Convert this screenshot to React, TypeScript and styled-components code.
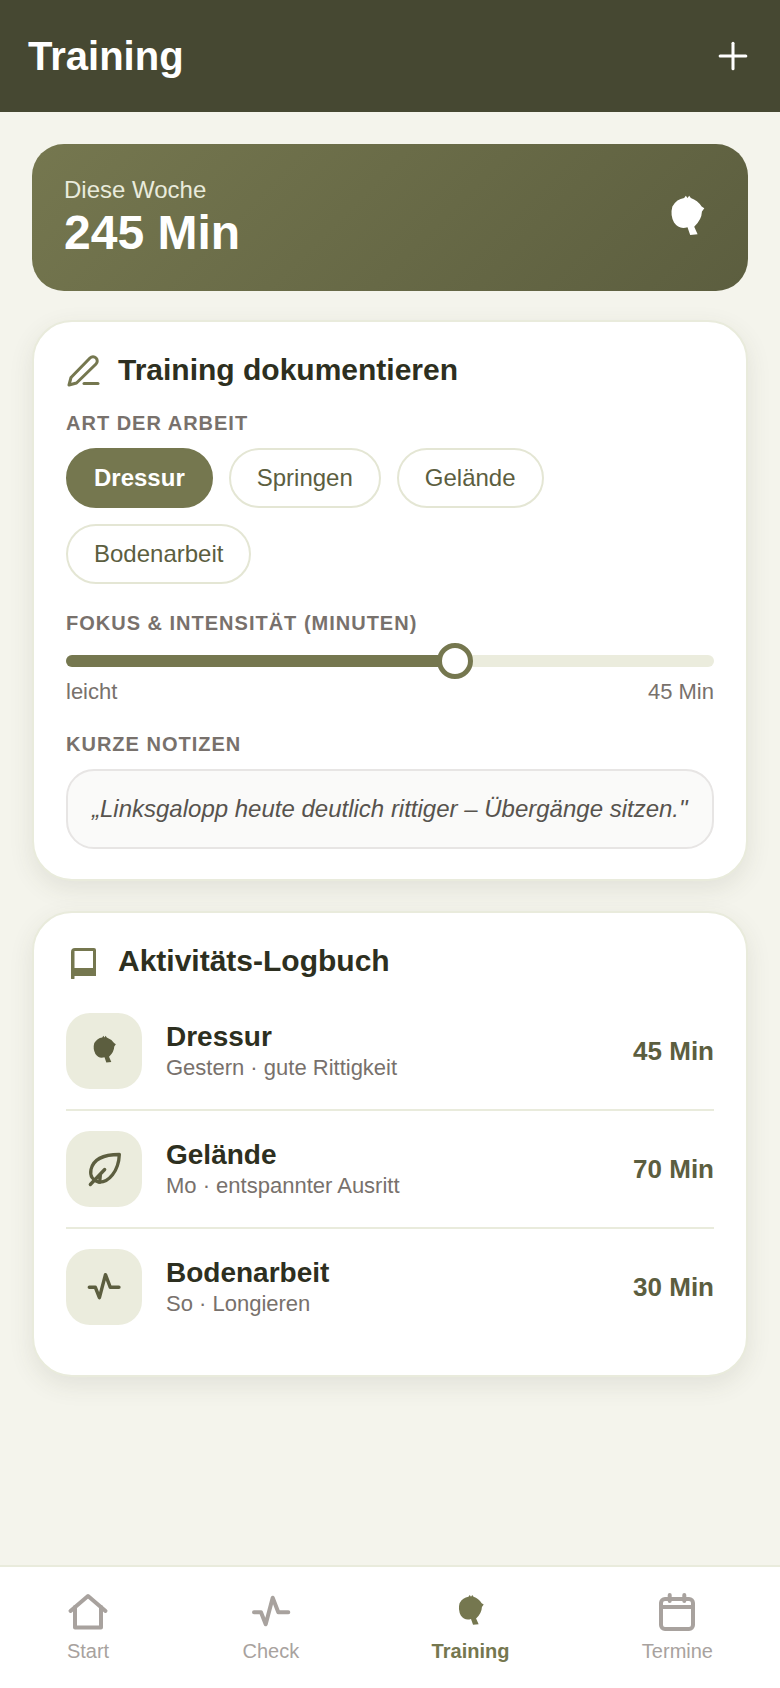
import styled, { createGlobalStyle } from "styled-components";
import { Plus } from "lucide-react";

const GlobalStyle = createGlobalStyle`
  * {
    box-sizing: border-box;
  }
  body {
    margin: 0;
    background: #f4f4ec;
    font-family: "Liberation Sans", Arial, sans-serif;
  }
`;

const HorseIcon = ({ width, color }: { width: number; color: string }) => (
  <svg width={width} height={(width * 148) / 110} viewBox="85 70 110 148">
    <path
      fill={color}
      d="M135 78L140 85L145 78L150 85Q170 92 182 110L190 115L183 125Q182 150 160 170L170 193L148 195L140 172Q115 180 100 158Q88 135 95 110Q108 88 130 85Z"
    />
  </svg>
);

const PencilIcon = () => (
  <svg width="36" height="36" viewBox="0 0 36 36" fill="none" stroke="#75774f" strokeWidth="3" strokeLinecap="round" strokeLinejoin="round">
    <path d="M3 33L5 25.5L24 6a4.2 4.2 0 0 1 6 6L10.5 31Z" />
    <path d="M18 31.5H32" />
  </svg>
);

const BookIcon = () => (
  <svg width="36" height="36" viewBox="0 0 36 36" fill="#75774f">
    <path
      fillRule="evenodd"
      d="M9 5H28a2 2 0 0 1 2 2V33H8.5V35a1.7 1.7 0 0 1-3.5 0V9a4 4 0 0 1 4-4ZM8.5 8V25H27V8Z"
    />
  </svg>
);

const LeafIcon = ({ color }: { color: string }) => (
  <svg width="35" height="37" viewBox="110 90 105 110" fill="none" stroke={color} strokeWidth="10" strokeLinecap="round" strokeLinejoin="round">
    <path d="M207 100C170 100 130 110 122 145C118 165 128 178 145 183C175 185 205 150 207 100Z" />
    <path d="M120 190L163 145M150 162L148 183" />
  </svg>
);

const PulseIcon = ({ size, color }: { size: number; color: string }) => (
  <svg width={size} height={size} viewBox="0 0 44 44" fill="none" stroke={color} strokeWidth="4" strokeLinecap="round" strokeLinejoin="round">
    <path d="M5 22.3H12L16.7 34.3L23.7 7.7L29.3 22.3H39.3" />
  </svg>
);

const HouseIcon = () => (
  <svg width="44" height="44" viewBox="0 0 44 44" fill="none" stroke="#a8a29e" strokeWidth="4" strokeLinecap="round" strokeLinejoin="round">
    <path d="M4.5 21L22 6L39.5 21" />
    <path d="M9 17V37.5H35V17" />
  </svg>
);

const CalendarIcon = () => (
  <svg width="44" height="44" viewBox="0 0 44 44" fill="none" stroke="#a8a29e" strokeWidth="4" strokeLinecap="round">
    <rect x="6" y="9" width="32" height="30" rx="4" />
    <path d="M6 17H38M14.7 5V11M29.3 5V11" />
  </svg>
);

const logItems = [
  { title: "Dressur", sub: "Gestern · gute Rittigkeit", min: "45 Min", icon: <HorseIcon width={25} color="#5c5e3f" /> },
  { title: "Gelände", sub: "Mo · entspannter Ausritt", min: "70 Min", icon: <LeafIcon color="#5c5e3f" /> },
  { title: "Bodenarbeit", sub: "So · Longieren", min: "30 Min", icon: <PulseIcon size={38} color="#5c5e3f" /> },
];

const sliderValue = 60;

export default function App() {
  return (
    <Page>
      <GlobalStyle />
      <Header>
        <HeaderTitle>Training</HeaderTitle>
        <AddButton>
          <Plus size={44} color="#ffffff" strokeWidth={1.65} />
        </AddButton>
      </Header>
      <Main>
        <Hero>
          <div>
            <HeroLabel>Diese Woche</HeroLabel>
            <HeroValue>245 Min</HeroValue>
          </div>
          <HorseIcon width={37} color="#ffffff" />
        </Hero>

        <Card>
          <CardHead>
            <PencilIcon />
            <CardTitle>Training dokumentieren</CardTitle>
          </CardHead>
          <Label>ART DER ARBEIT</Label>
          <Chips>
            <Chip $active>Dressur</Chip>
            <Chip>Springen</Chip>
            <Chip>Gelände</Chip>
            <Chip>Bodenarbeit</Chip>
          </Chips>
          <SectionLabel>FOKUS &amp; INTENSITÄT (MINUTEN)</SectionLabel>
          <Track>
            <Fill style={{ width: `${sliderValue}%` }} />
            <Thumb style={{ left: `${sliderValue}%` }} />
          </Track>
          <Scale>
            <span>leicht</span>
            <span>45 Min</span>
          </Scale>
          <SectionLabel>KURZE NOTIZEN</SectionLabel>
          <Notes>„Linksgalopp heute deutlich rittiger – Übergänge sitzen."</Notes>
        </Card>

        <Card>
          <LogHead>
            <BookIcon />
            <CardTitle>Aktivitäts-Logbuch</CardTitle>
          </LogHead>
          {logItems.map((item) => (
            <LogRow key={item.title}>
              <LogIcon>{item.icon}</LogIcon>
              <LogText>
                <LogTitle>{item.title}</LogTitle>
                <LogSub>{item.sub}</LogSub>
              </LogText>
              <LogMin>{item.min}</LogMin>
            </LogRow>
          ))}
        </Card>
      </Main>
      <Nav>
        <NavItem>
          <NavIcon><HouseIcon /></NavIcon>
          Start
        </NavItem>
        <NavItem>
          <NavIcon><PulseIcon size={44} color="#a8a29e" /></NavIcon>
          Check
        </NavItem>
        <NavItem $active>
          <NavIcon><HorseIcon width={28} color="#75774f" /></NavIcon>
          Training
        </NavItem>
        <NavItem>
          <NavIcon><CalendarIcon /></NavIcon>
          Termine
        </NavItem>
      </Nav>
    </Page>
  );
}

const Page = styled.div`
  display: flex;
  flex-direction: column;
  width: 780px;
  height: 1688px;
  background: #f4f4ec;
`;

const Header = styled.header`
  display: flex;
  align-items: center;
  justify-content: space-between;
  height: 112px;
  padding: 0 25px 0 28px;
  background: #464832;
`;

const HeaderTitle = styled.h1`
  margin: 0;
  font-size: 40px;
  font-weight: 700;
  color: #ffffff;
`;

const AddButton = styled.div`
  display: flex;
`;

const Main = styled.main`
  flex: 1;
  padding: 32px;
`;

const Hero = styled.section`
  display: flex;
  align-items: center;
  justify-content: space-between;
  height: 147px;
  margin-bottom: 29px;
  padding: 0 42px 0 32px;
  border-radius: 32px;
  background: linear-gradient(135deg, #75774f, #5c5e3f);
  color: #ffffff;
`;

const HeroLabel = styled.div`
  margin-bottom: 1px;
  font-size: 24px;
  color: #e9ebdc;
`;

const HeroValue = styled.div`
  font-size: 48px;
  font-weight: 700;
`;

const Card = styled.section`
  margin-bottom: 30px;
  padding: 30px 32px;
  border: 2px solid #e9ebdc;
  border-radius: 40px;
  background: #ffffff;
  box-shadow: 0 8px 24px rgba(70, 72, 50, 0.1);
`;

const CardHead = styled.div`
  display: flex;
  align-items: center;
  gap: 16px;
  margin-bottom: 24px;
`;

const LogHead = styled(CardHead)`
  margin-bottom: 34px;
`;

const CardTitle = styled.h2`
  margin: 0;
  font-size: 30px;
  font-weight: 700;
  color: #2d2f20;
`;

const Label = styled.div`
  font-size: 20px;
  font-weight: 700;
  letter-spacing: 1px;
  color: #78716c;
`;

const SectionLabel = styled(Label)`
  margin-top: 28px;
`;

const Chips = styled.div`
  display: flex;
  flex-wrap: wrap;
  gap: 16px;
  margin-top: 13px;
`;

const Chip = styled.div<{ $active?: boolean }>`
  display: flex;
  align-items: center;
  height: 60px;
  padding: 0 26px;
  border: 2px solid ${(props) => (props.$active ? "#75774f" : "#e4e6d4")};
  border-radius: 30px;
  background: ${(props) => (props.$active ? "#75774f" : "#ffffff")};
  font-size: 24px;
  font-weight: ${(props) => (props.$active ? 700 : 400)};
  color: ${(props) => (props.$active ? "#ffffff" : "#5c5e3f")};
`;

const Track = styled.div`
  position: relative;
  height: 12px;
  margin-top: 20px;
  border-radius: 6px;
  background: #ebecdd;
`;

const Fill = styled.div`
  height: 100%;
  border-radius: 6px;
  background: #75774f;
`;

const Thumb = styled.div`
  position: absolute;
  top: 50%;
  width: 36px;
  height: 36px;
  border: 5px solid #75774f;
  border-radius: 50%;
  background: #ffffff;
  transform: translate(-50%, -50%);
`;

const Scale = styled.div`
  display: flex;
  justify-content: space-between;
  margin-top: 12px;
  font-size: 22px;
  color: #78716c;
`;

const Notes = styled.div`
  display: flex;
  align-items: center;
  height: 80px;
  margin-top: 13px;
  padding: 0 24px;
  border: 2px solid #e7e5e4;
  border-radius: 28px;
  background: #fafaf9;
  font-size: 24px;
  font-style: italic;
  white-space: nowrap;
  color: #57534e;
`;

const LogRow = styled.div`
  display: flex;
  align-items: center;
  gap: 24px;
  margin-bottom: 20px;
  padding-bottom: 20px;
  border-bottom: 2px solid #e9ebdc;

  &:last-child {
    margin-bottom: 0;
    border-bottom: none;
  }
`;

const LogIcon = styled.div`
  display: flex;
  align-items: center;
  justify-content: center;
  width: 76px;
  height: 76px;
  border-radius: 24px;
  background: #ebecdd;
`;

const LogText = styled.div`
  flex: 1;
`;

const LogTitle = styled.div`
  font-size: 28px;
  font-weight: 700;
  color: #2d2f20;
`;

const LogSub = styled.div`
  margin-top: 2px;
  font-size: 22px;
  color: #78716c;
`;

const LogMin = styled.div`
  font-size: 26px;
  font-weight: 700;
  color: #5c5e3f;
`;

const Nav = styled.nav`
  display: flex;
  justify-content: space-between;
  height: 123px;
  padding: 23px 67px 0 66px;
  border-top: 2px solid #e9ebdc;
  background: #ffffff;
`;

const NavItem = styled.div<{ $active?: boolean }>`
  display: flex;
  flex-direction: column;
  align-items: center;
  gap: 6px;
  font-size: 20px;
  font-weight: ${(props) => (props.$active ? 700 : 400)};
  color: ${(props) => (props.$active ? "#75774f" : "#a8a29e")};
`;

const NavIcon = styled.div`
  display: flex;
  align-items: center;
  justify-content: center;
  height: 44px;
`;
